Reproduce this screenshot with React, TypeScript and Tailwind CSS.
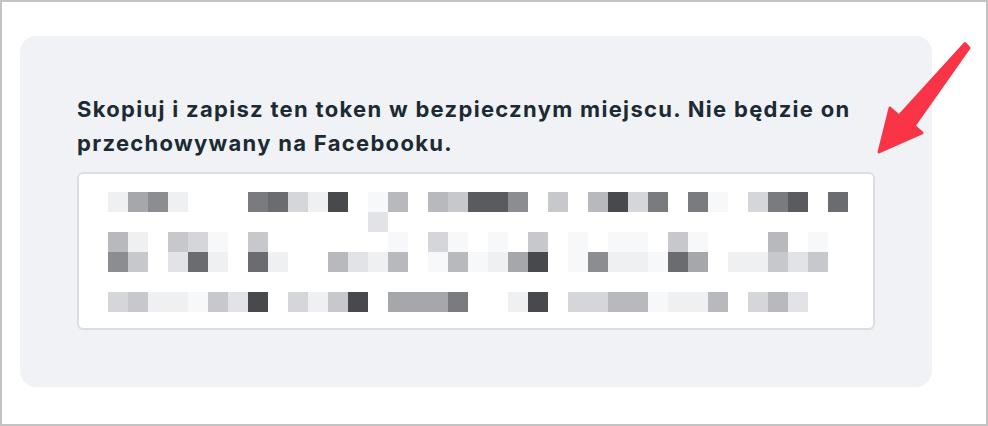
import React from 'react'

// blurred token, one char per 20px cell
const shades: Record<string, string> = {
  '.': 'bg-transparent',
  a: 'bg-[#f7f8fa]',
  b: 'bg-[#eff0f2]',
  c: 'bg-[#e2e3e6]',
  d: 'bg-[#d4d6d9]',
  e: 'bg-[#c7c8cb]',
  f: 'bg-[#b8b9bc]',
  g: 'bg-[#a6a7aa]',
  h: 'bg-[#8c8d90]',
  i: 'bg-[#7a7b7e]',
  j: 'bg-[#6b6c70]',
  k: 'bg-[#5a5b5f]',
  l: 'bg-[#47494d]',
}

const rows = [
  'bghb...ijdbl.af.fekkh.e.fldi.ia.dik.j',
  '.............c.......................',
  'fb.eda.e......a.da.a.e.a.aa.ea...f.a.',
  'he.cjb.jb..fcbf.afabgl.ahbbajg.bbece.',
  '.....................................',
  'debbaecl.dbel.gggi..bl.ddffabbf.dfc..',
]

function Arrow() {
  return (
    <svg className="absolute left-[860px] top-[30px]" width="120" height="130" viewBox="860 30 120 130">
      <polygon
        points="963,41.5 967,46 912,124 920,131 877,150 888,106 897,114"
        fill="#f93447"
        stroke="#f93447"
        strokeWidth="3"
        strokeLinejoin="round"
      />
    </svg>
  )
}

export default function App() {
  return (
    <div className="relative w-[988px] h-[426px] border-2 border-[#c3c3c3] bg-white font-['Inter',sans-serif]">
      <div className="ml-[18px] mt-[34px] w-[912px] rounded-2xl bg-[#f0f2f5] px-[57px] pt-[56px] pb-[57px]">
        <p className="text-[22px] leading-[34px] tracking-[1.3px] font-bold text-[#1c2b33] mb-[12px]">
          Skopiuj i zapisz ten token w bezpiecznym miejscu. Nie będzie on przechowywany na Facebooku.
        </p>
        <div className="h-[158px] rounded-md border-2 border-[#dadde1] bg-white pl-[29px] pt-[18px]">
          <div className="flex flex-col">
            {rows.map((row, r) => (
              <div key={r} className="flex">
                {row.split('').map((ch, c) => (
                  <div key={c} className={`w-5 h-5 ${shades[ch]}`} />
                ))}
              </div>
            ))}
          </div>
        </div>
      </div>
      <Arrow />
    </div>
  )
}
